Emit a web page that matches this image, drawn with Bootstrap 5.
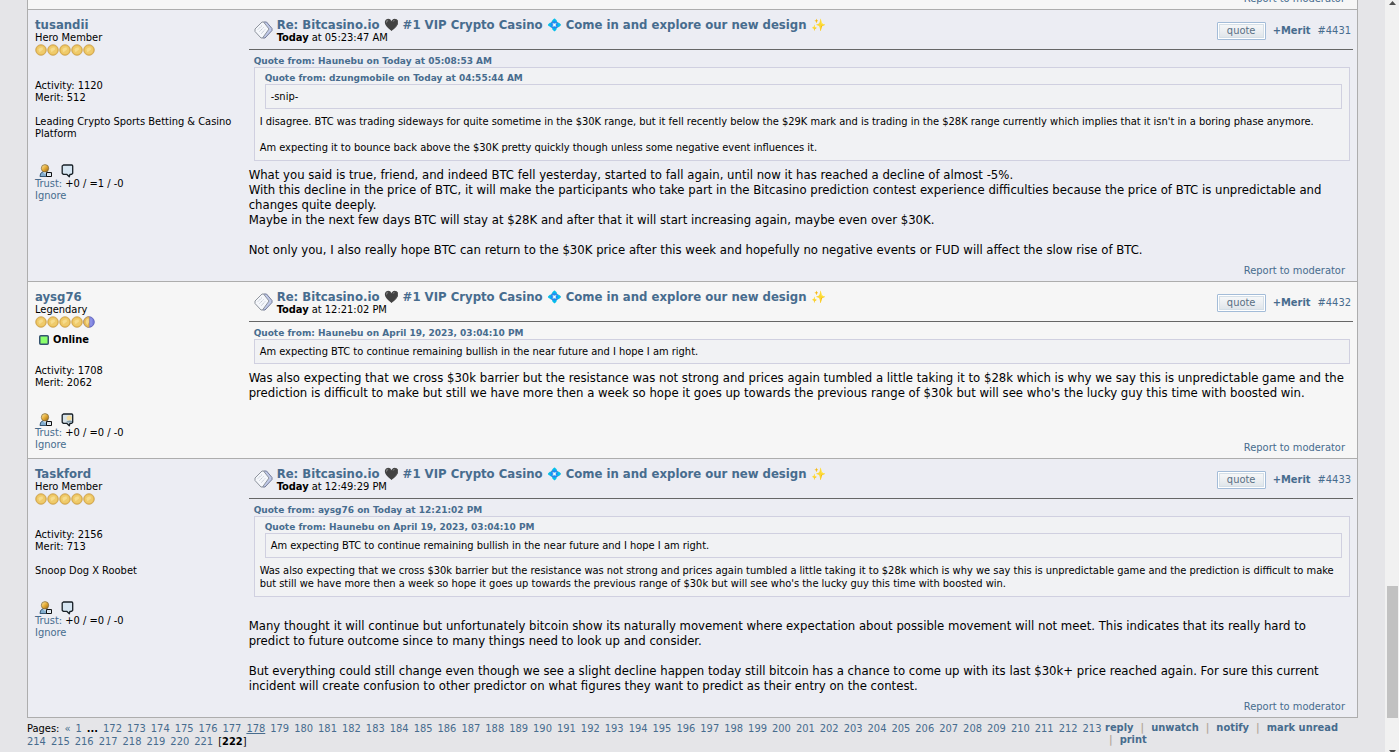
<!DOCTYPE html>
<html lang="en">
<head>
<meta charset="utf-8">
<meta name="viewport" content="width=device-width, initial-scale=1">
<title>Bitcasino.io – #1 VIP Crypto Casino</title>
<link href="https://cdn.jsdelivr.net/npm/bootstrap@5.3.0/dist/css/bootstrap.min.css" rel="stylesheet">
<script src="https://cdn.jsdelivr.net/npm/bootstrap@5.3.0/dist/js/bootstrap.bundle.min.js"></script>
<style>
body{font-family:"DejaVu Sans Condensed","DejaVu Sans",sans-serif;font-size:11px;line-height:12px;color:#000;background:#e5e5e8}
a{color:#476c8e;text-decoration:none}
a:hover{text-decoration:underline}
svg{display:block}
.viewport{height:100vh;overflow:hidden}
.page-area{padding:0 27px;min-width:0}
.topic{border:1px solid #adadad;border-top:0}
.previous-post{margin-top:-7px;background:#f6f6f6;padding:0 12px 4px}
.post{background:#ecedf3;border-top:1px solid #adadad}
.post.alt{background:#f6f6f6}
.poster{width:16%;padding:8px 0 7px 7px}
.poster-name,.subject{font-size:13px;line-height:14px;font-weight:bold}
.gap-lines{margin-top:24px}
.online-row{margin:6px 0 -5px 4px}
.post-body{padding:7px 4px 4px 8px;min-width:0}
.post-head{border-bottom:1px solid #666;padding:0 2px 5px 5px}
.post-head .subject{line-height:15px}
.post-icon{margin:4px 4px 0 0}
.emoji{font-size:12px;line-height:12px}
.head-tools{margin-top:5px;gap:7px}
.quote-btn{width:49px;height:18px;padding:0;font-size:11px;line-height:12px;color:#5a6f84;border:1px solid #a3bcd8;border-radius:1px;background:linear-gradient(#f8f9fa,#eceff2 50%,#dce3e8);box-shadow:inset 0 0 0 1px #fff,inset 0 0 0 2px #d5dfe7}
.quoted{margin:5px 3px 6px 5px}
.quote-head{font-family:"DejaVu Sans",sans-serif;font-size:9px;line-height:12px;font-weight:bold}
.quote-box{border:1px solid #d0d0e0;background:#f1f2f4;line-height:13px;padding:5px 5px 6px}
.quote-box.inner{padding:5px}
.quote-box .quoted{margin:-1px 2px 6px 5px}
.words{font-size:13px;line-height:15px}
.report{padding:8px 8px 0 0}
.topic-foot{padding-top:4px}
.page-list{line-height:13px;column-gap:5px}
.thread-links{width:249px;line-height:12px;font-weight:bold;margin-right:4px}
.thread-links .link-row{column-gap:7px}
.divider{color:#b5a99c}
.scroll-track{width:14px;background:#f1f1f1;padding:1px 1px 0 2px}
.scroll-thumb{flex:132 0 0;background:#c1c1c1}
</style>
</head>
<body>
<svg width="0" height="0" class="position-absolute" aria-hidden="true">
<defs>
<linearGradient id="skin" x1="0" y1="0" x2="1" y2="1"><stop offset="0" stop-color="#fff0b0"/><stop offset=".5" stop-color="#e5ab35"/><stop offset="1" stop-color="#8f6113"/></linearGradient>
<symbol id="coin" viewBox="0 0 12 12"><circle cx="6" cy="6" r="5.3" fill="#e9bd55" stroke="#c9a04f" stroke-width=".8"/><circle cx="6" cy="6" r="4" fill="#efcb6c"/><path d="M3.4 5.6Q4.6 3 7.6 3.6L8 5.5 4.5 8.3z" fill="#f6dc8d"/></symbol>
<symbol id="half-coin" viewBox="0 0 12 12"><circle cx="6" cy="6" r="5.3" fill="#7f83df" stroke="#5559b5" stroke-width=".8"/><path d="M6 .7A5.3 5.3 0 0 0 6 11.3z" fill="#e8bd59" stroke="#c9a04f" stroke-width=".8"/><path d="M5.6 2.3A3.8 3.8 0 0 0 4.4 9.2L6 6z" fill="#f4d788"/><path d="M8 2.5v7" stroke="#989ded"/></symbol>
<symbol id="person" viewBox="0 0 14 14"><path d="M1 12.5Q.8 8.8 4 7.7H8Q11 8.7 10.8 12.5z" fill="#83aecf" stroke="#385875"/><path d="M4 8l2 2 2-2z" fill="#dce9f3"/><circle cx="6" cy="4.3" r="3.7" fill="url(#skin)" stroke="#7b663b" stroke-width=".7"/><path d="M7.5 8.5h5v4h-5z" fill="#e7eff6" stroke="#111"/><path d="M8 9l2 1.7L12 9" fill="none" stroke="#b8c7d2" stroke-width=".6"/></symbol>
<symbol id="bubble" viewBox="0 0 14 14"><path d="M2.5 1h8.2q1 0 1 1v7.3l-1 1H9l-.7 2.5L5.7 10.3H2.2l-1-1V2z" fill="#d7e6f2" stroke="#182027" stroke-width="1.3" stroke-linejoin="round"/></symbol>
<symbol id="bubble-lit" viewBox="0 0 14 14"><path d="M2.5 1h8.2q1 0 1 1v7.3l-1 1H9l-.7 2.5L5.7 10.3H2.2l-1-1V2z" fill="#d7e2e9" stroke="#182027" stroke-width="1.3" stroke-linejoin="round"/><circle cx="8.2" cy="5" r="2.6" fill="#f4dda0"/><path d="M4.5 9.5q3-3 6.5-1.5v1.5z" fill="#8199aa"/></symbol>
<symbol id="note" viewBox="0 0 19 18"><path d="M9.5 1h3L18 7.5v2L11 17H8.5z" fill="#c0c9e8" stroke="#737b96"/><path d="M9.5 1L15 8 8.5 17H7L1 10.5V8L8 1z" fill="#f5f7fb" stroke="#8d939c"/><path d="M4 8.5l4-4M5.5 10.5l4-4M7.5 12.5l3.5-4" stroke="#b9c0cb" stroke-dasharray="1.5 .8"/></symbol>
</defs>
</svg>
<div class="viewport d-flex">
<main class="page-area flex-grow-1">
<div class="topic">
<div class="previous-post text-end"><a href="#">Report to moderator</a></div>

<article class="post d-flex">
<aside class="poster flex-shrink-0">
<div class="poster-name"><a href="#">tusandii</a></div>
<div>Hero Member</div>
<div class="d-flex"><svg width="12" height="12"><use href="#coin"/></svg><svg width="12" height="12"><use href="#coin"/></svg><svg width="12" height="12"><use href="#coin"/></svg><svg width="12" height="12"><use href="#coin"/></svg><svg width="12" height="12"><use href="#coin"/></svg></div>
<div class="gap-lines">Activity: 1120<br>Merit: 512<br><br>Leading Crypto Sports Betting &amp; Casino Platform</div>
<div class="gap-lines d-flex gap-2 ps-1"><a href="#" aria-label="Profile"><svg width="14" height="14"><use href="#person"/></svg></a><a href="#" aria-label="Message"><svg width="14" height="14"><use href="#bubble"/></svg></a></div>
<div><a href="#">Trust:</a> +0 / =1 / -0<br><a href="#">Ignore</a></div>
</aside>
<section class="post-body flex-grow-1 d-flex flex-column">
<header class="post-head d-flex align-items-start">
<svg class="post-icon flex-shrink-0" width="19" height="18"><use href="#note"/></svg>
<div class="flex-grow-1"><div class="subject"><a href="#">Re: Bitcasino.io <span class="emoji">🖤</span> #1 VIP Crypto Casino <span class="emoji">💠</span> Come in and explore our new design <span class="emoji">✨</span></a></div><div><b>Today</b> at 05:23:47 AM</div></div>
<div class="head-tools d-flex align-items-center"><button type="button" class="quote-btn">quote</button><a href="#" class="fw-bold">+Merit</a><a href="#">#4431</a></div>
</header>
<div class="quoted">
<div class="quote-head"><a href="#">Quote from: Haunebu on Today at 05:08:53 AM</a></div>
<div class="quote-box">
<div class="quoted"><div class="quote-head"><a href="#">Quote from: dzungmobile on Today at 04:55:44 AM</a></div><div class="quote-box inner">-snip-</div></div>
I disagree. BTC was trading sideways for quite sometime in the $30K range, but it fell recently below the $29K mark and is trading in the $28K range currently which implies that it isn't in a boring phase anymore.<br><br>Am expecting it to bounce back above the $30K pretty quickly though unless some negative event influences it.
</div>
</div>
<div class="words">What you said is true, friend, and indeed BTC fell yesterday, started to fall again, until now it has reached a decline of almost -5%.<br>With this decline in the price of BTC, it will make the participants who take part in the Bitcasino prediction contest experience difficulties because the price of BTC is unpredictable and<br>changes quite deeply.<br>Maybe in the next few days BTC will stay at $28K and after that it will start increasing again, maybe even over $30K.<br><br>Not only you, I also really hope BTC can return to the $30K price after this week and hopefully no negative events or FUD will affect the slow rise of BTC.</div>
<div class="report text-end mt-auto"><a href="#">Report to moderator</a></div>
</section>
</article>

<article class="post alt d-flex">
<aside class="poster flex-shrink-0">
<div class="poster-name"><a href="#">aysg76</a></div>
<div>Legendary</div>
<div class="d-flex"><svg width="12" height="12"><use href="#coin"/></svg><svg width="12" height="12"><use href="#coin"/></svg><svg width="12" height="12"><use href="#coin"/></svg><svg width="12" height="12"><use href="#coin"/></svg><svg width="12" height="12"><use href="#half-coin"/></svg></div>
<div class="online-row d-flex align-items-center gap-1"><svg width="10" height="10" viewBox="0 0 10 10"><rect x=".75" y=".75" width="8.5" height="8.5" rx="1" fill="#8bff6c" stroke="#34536f" stroke-width="1.5"/></svg><b>Online</b></div>
<div class="gap-lines">Activity: 1708<br>Merit: 2062</div>
<div class="gap-lines d-flex gap-2 ps-1"><a href="#" aria-label="Profile"><svg width="14" height="14"><use href="#person"/></svg></a><a href="#" aria-label="Message"><svg width="14" height="14"><use href="#bubble-lit"/></svg></a></div>
<div><a href="#">Trust:</a> +0 / =0 / -0<br><a href="#">Ignore</a></div>
</aside>
<section class="post-body flex-grow-1 d-flex flex-column">
<header class="post-head d-flex align-items-start">
<svg class="post-icon flex-shrink-0" width="19" height="18"><use href="#note"/></svg>
<div class="flex-grow-1"><div class="subject"><a href="#">Re: Bitcasino.io <span class="emoji">🖤</span> #1 VIP Crypto Casino <span class="emoji">💠</span> Come in and explore our new design <span class="emoji">✨</span></a></div><div><b>Today</b> at 12:21:02 PM</div></div>
<div class="head-tools d-flex align-items-center"><button type="button" class="quote-btn">quote</button><a href="#" class="fw-bold">+Merit</a><a href="#">#4432</a></div>
</header>
<div class="quoted">
<div class="quote-head"><a href="#">Quote from: Haunebu on April 19, 2023, 03:04:10 PM</a></div>
<div class="quote-box inner">Am expecting BTC to continue remaining bullish in the near future and I hope I am right.</div>
</div>
<div class="words">Was also expecting that we cross $30k barrier but the resistance was not strong and prices again tumbled a little taking it to $28k which is why we say this is unpredictable game and the prediction is difficult to make but still we have more then a week so hope it goes up towards the previous range of $30k but will see who's the lucky guy this time with boosted win.</div>
<div class="report text-end mt-auto"><a href="#">Report to moderator</a></div>
</section>
</article>

<article class="post d-flex">
<aside class="poster flex-shrink-0">
<div class="poster-name"><a href="#">Taskford</a></div>
<div>Hero Member</div>
<div class="d-flex"><svg width="12" height="12"><use href="#coin"/></svg><svg width="12" height="12"><use href="#coin"/></svg><svg width="12" height="12"><use href="#coin"/></svg><svg width="12" height="12"><use href="#coin"/></svg><svg width="12" height="12"><use href="#coin"/></svg></div>
<div class="gap-lines">Activity: 2156<br>Merit: 713<br><br>Snoop Dog X Roobet</div>
<div class="gap-lines d-flex gap-2 ps-1"><a href="#" aria-label="Profile"><svg width="14" height="14"><use href="#person"/></svg></a><a href="#" aria-label="Message"><svg width="14" height="14"><use href="#bubble"/></svg></a></div>
<div><a href="#">Trust:</a> +0 / =0 / -0<br><a href="#">Ignore</a></div>
</aside>
<section class="post-body flex-grow-1 d-flex flex-column">
<header class="post-head d-flex align-items-start">
<svg class="post-icon flex-shrink-0" width="19" height="18"><use href="#note"/></svg>
<div class="flex-grow-1"><div class="subject"><a href="#">Re: Bitcasino.io <span class="emoji">🖤</span> #1 VIP Crypto Casino <span class="emoji">💠</span> Come in and explore our new design <span class="emoji">✨</span></a></div><div><b>Today</b> at 12:49:29 PM</div></div>
<div class="head-tools d-flex align-items-center"><button type="button" class="quote-btn">quote</button><a href="#" class="fw-bold">+Merit</a><a href="#">#4433</a></div>
</header>
<div class="quoted">
<div class="quote-head"><a href="#">Quote from: aysg76 on Today at 12:21:02 PM</a></div>
<div class="quote-box">
<div class="quoted"><div class="quote-head"><a href="#">Quote from: Haunebu on April 19, 2023, 03:04:10 PM</a></div><div class="quote-box inner">Am expecting BTC to continue remaining bullish in the near future and I hope I am right.</div></div>
Was also expecting that we cross $30k barrier but the resistance was not strong and prices again tumbled a little taking it to $28k which is why we say this is unpredictable game and the prediction is difficult to make<br>but still we have more then a week so hope it goes up towards the previous range of $30k but will see who's the lucky guy this time with boosted win.
</div>
</div>
<div class="words"><br>Many thought it will continue but unfortunately bitcoin show its naturally movement where expectation about possible movement will not meet. This indicates that its really hard to<br>predict to future outcome since to many things need to look up and consider.<br><br>But everything could still change even though we see a slight decline happen today still bitcoin has a chance to come up with its last $30k+ price reached again. For sure this current<br>incident will create confusion to other predictor on what figures they want to predict as their entry on the contest.</div>
<div class="report text-end mt-auto"><a href="#">Report to moderator</a></div>
</section>
</article>
</div>

<footer class="topic-foot d-flex">
<nav class="page-list d-flex flex-wrap flex-grow-1" aria-label="Pages" id="pageList"><span>Pages:</span><a href="#">«</a><a href="#">1</a><b>...</b></nav>
<nav class="thread-links flex-shrink-0" aria-label="Topic actions">
<div class="link-row d-flex"><a href="#">reply</a><span class="divider">|</span><a href="#">unwatch</a><span class="divider">|</span><a href="#">notify</a><span class="divider">|</span><a href="#">mark unread</a></div>
<div class="link-row d-flex ps-1"><span class="divider">|</span><a href="#">print</a></div>
</nav>
</footer>
</main>
<div class="scroll-track d-flex flex-column flex-shrink-0" aria-hidden="true">
<svg width="11" height="14" viewBox="0 0 11 14"><path d="M2 4L5.5 0 9 4z" fill="#505050"/></svg>
<div style="flex:571 0 0"></div>
<div class="scroll-thumb"></div>
<div style="flex:32 0 0"></div>
<svg width="11" height="2" viewBox="0 0 11 2"><path d="M2 0h7L7.3 2H3.7z" fill="#505050"/></svg>
</div>
</div>
<script>
// Links to pages 172-221, then the page being read
const list = document.getElementById('pageList');
for (let n = 172; n <= 221; n++) {
  const a = document.createElement('a');
  a.href = '#';
  a.textContent = n;
  if (n === 178) a.className = 'text-decoration-underline';
  list.append(a);
}
const here = document.createElement('span');
here.innerHTML = '[<b>222</b>]';
list.append(here);
</script>
</body>
</html>
